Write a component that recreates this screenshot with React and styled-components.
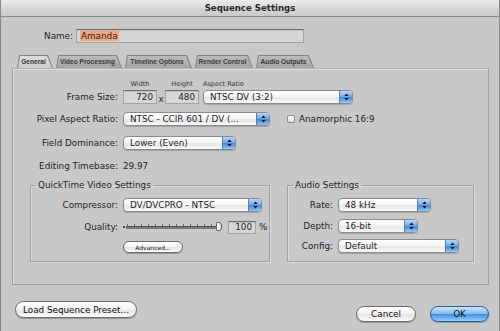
import React from 'react';
import styled, { createGlobalStyle } from 'styled-components';

const Global = createGlobalStyle`
    html, body {
        margin: 0;
        padding: 0;
        width: 500px;
        height: 331px;
        overflow: hidden;
        background: #c7c7c7;
    }
    * {
        box-sizing: border-box;
    }
`;

const Window = styled.div`
    width: 500px;
    height: 331px;
    display: flex;
    flex-direction: column;
    background: #c8c8c8;
    border-left: 1px solid #8a8a8a;
    border-right: 1px solid #8a8a8a;
    font-family: 'DejaVu Sans', 'Lucida Grande', sans-serif;
    font-size: 8.8px;
    color: #1e1e1e;
`;

const TitleBar = styled.div`
    height: 17px;
    display: flex;
    align-items: center;
    justify-content: center;
    background: linear-gradient(#ececec, #d4d4d4 60%, #c9c9c9);
    border-bottom: 1px solid #8d8d8d;
    font-size: 8.6px;
    font-weight: bold;
    color: #2a2a2a;
`;

const Body = styled.div`
    flex: 1;
    display: flex;
    flex-direction: column;
    padding: 12px 10px 0 11px;
`;

const NameRow = styled.div`
    display: flex;
    align-items: center;
    gap: 3px;
`;

const NameLabel = styled.span`
    width: 61px;
    text-align: right;
`;

const TextField = styled.div`
    width: ${({ $w }) => $w}px;
    height: ${({ $h }) => $h || 14}px;
    display: flex;
    align-items: center;
    justify-content: ${({ $right }) => ($right ? 'flex-end' : 'flex-start')};
    padding: 0 3px;
    background: #d6d6d6;
    border: 1px solid #a3a3a3;
    border-top-color: #6f6f6f;
    box-shadow: inset 0 1px 0 #bdbdbd;
    margin-left: ${({ $ml }) => $ml || 0}px;
`;

const Selected = styled.span`
    background: #f3a57e;
    padding: 0 1px;
`;

const TabStrip = styled.div`
    display: flex;
    gap: 3px;
    margin-top: 12px;
    padding-left: 5px;
    height: 13px;
`;

const tabShape = 'polygon(2px 0, calc(100% - 5px) 0, 100% 100%, 0 100%)';

const Tab = styled.div`
    width: ${({ $w }) => $w}px;
    height: 13px;
    padding: 1px 1px 0 1px;
    background: #858585;
    clip-path: ${tabShape};
`;

const TabFace = styled.div`
    height: 12px;
    padding-right: 3px;
    line-height: 12px;
    text-align: center;
    font-family: 'Liberation Sans', Arial, sans-serif;
    font-size: 6.6px;
    font-weight: bold;
    color: #3a3a3a;
    white-space: nowrap;
    clip-path: ${tabShape};
    background: ${({ $active }) =>
        $active ? 'linear-gradient(#dcdcdc, #cbcbcb)' : 'linear-gradient(#bcbcbc, #a4a4a4)'};
`;

const Panel = styled.div`
    height: 217px;
    display: flex;
    flex-direction: column;
    padding-top: 9px;
    border: 1px solid #a0a0a0;
    border-top-color: #b4b4b4;
    box-shadow: inset 1px 1px 0 rgba(255, 255, 255, 0.35);
`;

const Row = styled.div`
    display: flex;
    align-items: center;
    height: ${({ $h }) => $h || 14}px;
    margin-top: ${({ $top }) => $top || 0}px;
`;

const Label = styled.span`
    width: ${({ $w }) => $w}px;
    margin-right: 5px;
    text-align: right;
    white-space: nowrap;
`;

const Header = styled.span`
    width: ${({ $w }) => $w}px;
    text-align: ${({ $left }) => ($left ? 'left' : 'center')};
    font-size: 6.5px;
    color: #333;
    white-space: nowrap;
`;

const Times = styled.span`
    width: 8px;
    text-align: center;
    margin-top: 3px;
`;

const Popup = styled.div`
    width: ${({ $w }) => $w}px;
    height: 14px;
    display: flex;
    align-items: stretch;
    border: 1px solid #8a8a8a;
    border-radius: 4px;
    overflow: hidden;
    background: linear-gradient(#ffffff, #f4f4f4 50%, #e6e6e6 51%, #f8f8f8);
    box-shadow: 0 1px 1px rgba(0, 0, 0, 0.18);
    margin-left: ${({ $ml }) => $ml || 0}px;
`;

const PopupText = styled.span`
    flex: 1;
    padding-left: 6px;
    line-height: 12px;
    white-space: nowrap;
    overflow: hidden;
`;

const PopupArrow = styled.span`
    width: 13px;
    display: flex;
    align-items: center;
    justify-content: center;
    background: linear-gradient(#b9d8f7, #6aa6ea 50%, #3b84dc 51%, #95c6f6);
    border-left: 1px solid #5a7fa8;
`;

const Arrows = () => (
    <svg width="5" height="8" viewBox="0 0 5 8">
        <path d="M2.5 0.5 L4.6 3 L0.4 3 Z" fill="#111" />
        <path d="M0.4 5 L4.6 5 L2.5 7.5 Z" fill="#111" />
    </svg>
);

const Select = ({ w, ml, children }) => (
    <Popup $w={w} $ml={ml}>
        <PopupText>{children}</PopupText>
        <PopupArrow>
            <Arrows />
        </PopupArrow>
    </Popup>
);

const Check = styled.span`
    width: 8px;
    height: 8px;
    margin: 0 4px 0 17px;
    border: 1px solid #8a8a8a;
    border-radius: 2px;
    background: linear-gradient(#ffffff, #e2e2e2);
`;

const Groups = styled.div`
    display: flex;
    align-items: stretch;
    gap: 17px;
    margin: 7px 0 0 17px;
`;

const Group = styled.fieldset`
    width: ${({ $w }) => $w}px;
    margin: 0;
    padding: 0 0 8px 0;
    min-width: 0;
    border: 1px solid #a2a2a2;
    box-shadow: inset 1px 1px 0 rgba(255, 255, 255, 0.35), 1px 1px 0 rgba(255, 255, 255, 0.35);
`;

const Legend = styled.legend`
    margin-left: 5px;
    padding: 0 2px;
    line-height: 11px;
`;

const Slider = styled.div`
    position: relative;
    width: 99px;
    height: 14px;
    background: repeating-linear-gradient(90deg, #6a6a6a 0 1px, transparent 1px 7px) 4px 4px / 90px 2px no-repeat;
    &::before {
        content: '';
        position: absolute;
        left: 3px;
        right: 3px;
        top: 6px;
        height: 2px;
        background: #777;
        border-top: 1px solid #555;
    }
    &::after {
        content: '';
        position: absolute;
        left: 0;
        top: 6px;
        width: 2px;
        height: 2px;
        background: #444;
    }
`;

const Thumb = styled.span`
    position: absolute;
    right: 0;
    top: 2px;
    width: 6px;
    height: 9px;
    border: 1px solid #666;
    border-radius: 1px 3px 3px 1px;
    background: linear-gradient(90deg, #ffffff, #d8d8d8);
`;

const Percent = styled.span`
    margin-left: 3px;
`;

const Button = styled.div`
    height: ${({ $h }) => $h}px;
    width: ${({ $w }) => $w}px;
    display: flex;
    align-items: center;
    justify-content: center;
    border: 1px solid ${({ $primary }) => ($primary ? '#2d5f95' : '#6c6c6c')};
    border-radius: 10px;
    font-size: ${({ $small }) => ($small ? 6 : 8.8)}px;
    color: #111;
    white-space: nowrap;
    background: ${({ $primary }) =>
        $primary
            ? 'linear-gradient(#cfe6fc, #7fb8ef 50%, #3f8ee2 51%, #93cdfb)'
            : 'linear-gradient(#ffffff, #f3f3f3 50%, #e3e3e3 51%, #fbfbfb)'};
    box-shadow: 0 1px 1px rgba(0, 0, 0, 0.25);
    margin-left: ${({ $ml }) => $ml || 0}px;
`;

const Footer = styled.div`
    display: flex;
    justify-content: space-between;
    align-items: flex-start;
    margin-top: 16px;
`;

const FooterRight = styled.div`
    display: flex;
    gap: 14px;
    margin-top: 5px;
`;

const TABS = [
    { label: 'General', w: 36 },
    { label: 'Video Processing', w: 66 },
    { label: 'Timeline Options', w: 67 },
    { label: 'Render Control', w: 58 },
    { label: 'Audio Outputs', w: 58 },
];

const App = () => (
    <>
        <Global />
        <Window>
            <TitleBar>Sequence Settings</TitleBar>
            <Body>
                <NameRow>
                    <NameLabel>Name:</NameLabel>
                    <TextField $w={228}>
                        <Selected>Amanda</Selected>
                    </TextField>
                </NameRow>
                <TabStrip>
                    {TABS.map((tab, i) => (
                        <Tab key={tab.label} $w={tab.w}>
                            <TabFace $active={i === 0}>{tab.label}</TabFace>
                        </Tab>
                    ))}
                </TabStrip>
                <Panel>
                    <Row $h={11}>
                        <Label $w={105} />
                        <Header $w={34}>Width</Header>
                        <Header $w={8} />
                        <Header $w={34}>Height</Header>
                        <Header $w={4} />
                        <Header $w={60} $left>
                            Aspect Ratio
                        </Header>
                    </Row>
                    <Row $top={1}>
                        <Label $w={105}>Frame Size:</Label>
                        <TextField $w={34} $right>
                            720
                        </TextField>
                        <Times>x</Times>
                        <TextField $w={34} $right>
                            480
                        </TextField>
                        <Select w={150} ml={4}>
                            NTSC DV (3:2)
                        </Select>
                    </Row>
                    <Row $top={8}>
                        <Label $w={105}>Pixel Aspect Ratio:</Label>
                        <Select w={147}>NTSC - CCIR 601 / DV (...</Select>
                        <Check />
                        <span>Anamorphic 16:9</span>
                    </Row>
                    <Row $top={10}>
                        <Label $w={105}>Field Dominance:</Label>
                        <Select w={113}>Lower (Even)</Select>
                    </Row>
                    <Row $top={9}>
                        <Label $w={105}>Editing Timebase:</Label>
                        <span>29.97</span>
                    </Row>
                    <Groups>
                        <Group $w={240}>
                            <Legend>QuickTime Video Settings</Legend>
                            <Row $top={7}>
                                <Label $w={87}>Compressor:</Label>
                                <Select w={139}>DV/DVCPRO - NTSC</Select>
                            </Row>
                            <Row $top={8}>
                                <Label $w={87}>Quality:</Label>
                                <Slider>
                                    <Thumb />
                                </Slider>
                                <TextField $w={28} $h={13} $right $ml={6}>
                                    100
                                </TextField>
                                <Percent>%</Percent>
                            </Row>
                            <Row $top={7} $h={12}>
                                <Label $w={87} />
                                <Button $w={60} $h={12} $small>
                                    Advanced...
                                </Button>
                            </Row>
                        </Group>
                        <Group $w={187}>
                            <Legend>Audio Settings</Legend>
                            <Row $top={7}>
                                <Label $w={45}>Rate:</Label>
                                <Select w={93}>48 kHz</Select>
                            </Row>
                            <Row $top={7}>
                                <Label $w={45}>Depth:</Label>
                                <Select w={80}>16-bit</Select>
                            </Row>
                            <Row $top={6}>
                                <Label $w={45}>Config:</Label>
                                <Select w={121}>Default</Select>
                            </Row>
                        </Group>
                    </Groups>
                </Panel>
                <Footer>
                    <Button $w={122} $h={17} $ml={3}>
                        Load Sequence Preset...
                    </Button>
                    <FooterRight>
                        <Button $w={60} $h={16}>
                            Cancel
                        </Button>
                        <Button $w={59} $h={16} $primary>
                            OK
                        </Button>
                    </FooterRight>
                </Footer>
            </Body>
        </Window>
    </>
);

export default App;
